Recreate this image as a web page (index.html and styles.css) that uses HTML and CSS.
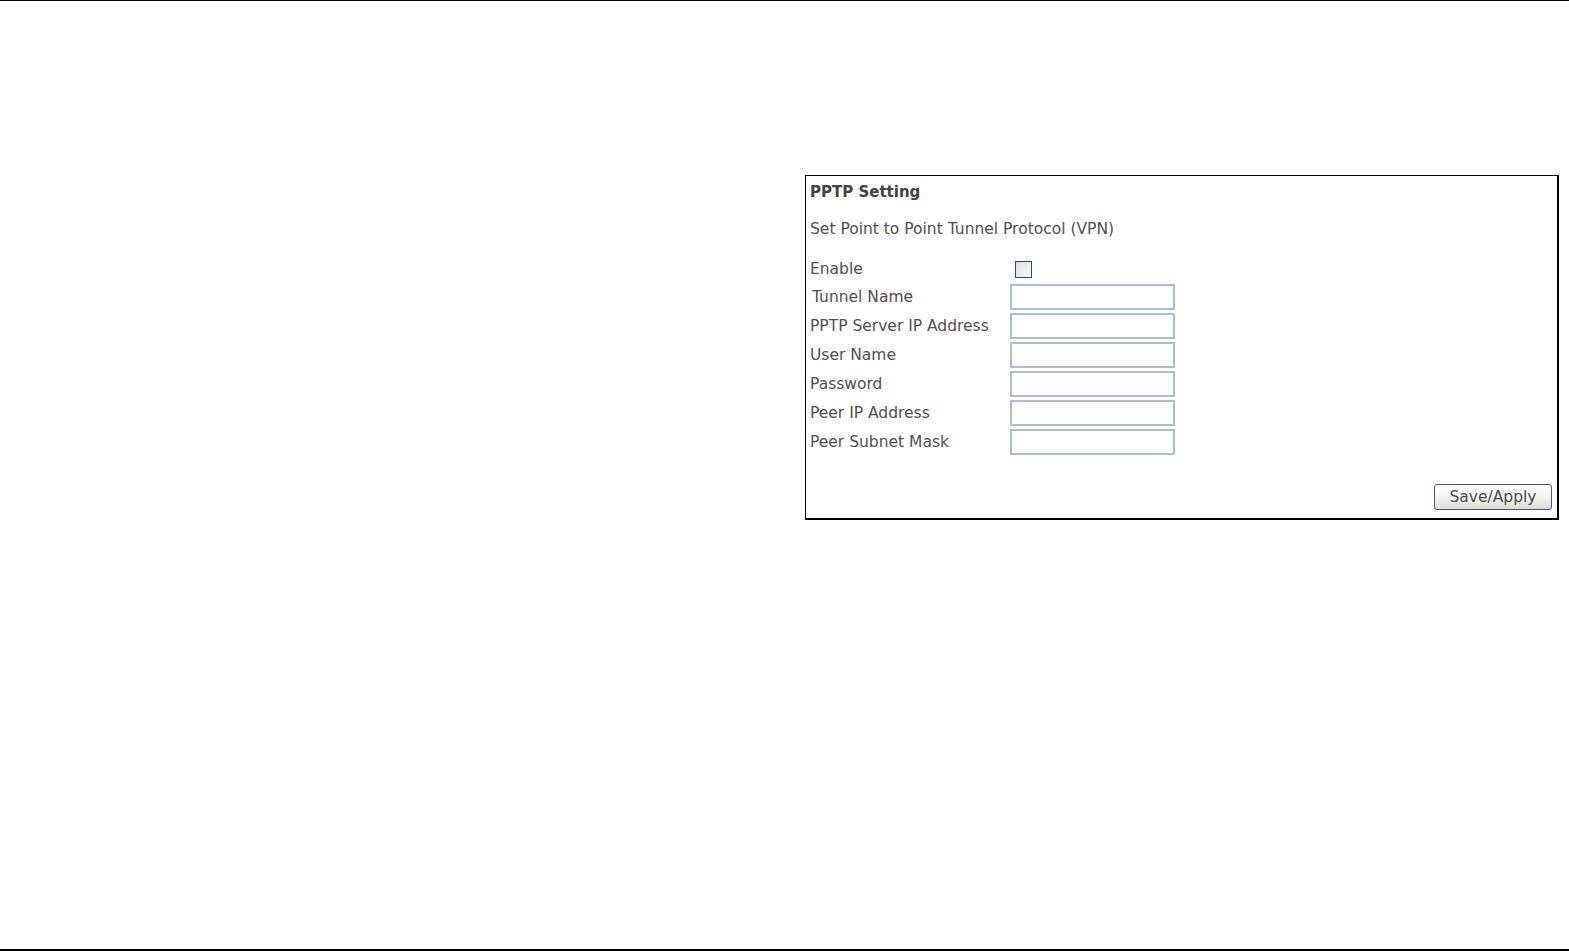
FILE: index.html
```html
<!DOCTYPE html>
<html lang="en">
<head>
  <meta charset="UTF-8">
  <title>PPTP Setting</title>
  <link rel="stylesheet" href="styles.css">
</head>
<body>
  <div class="page">
    <form class="panel">
      <div class="title">PPTP Setting</div>
      <p class="intro">Set Point to Point Tunnel Protocol (VPN)</p>

      <div class="fields">
        <label for="enable" class="low">Enable</label>
        <div><input type="checkbox" id="enable" class="check"></div>

        <label for="tunnel" class="shift">Tunnel Name</label>
        <input type="text" id="tunnel" class="field">

        <label for="server">PPTP Server IP Address</label>
        <input type="text" id="server" class="field">

        <label for="user">User Name</label>
        <input type="text" id="user" class="field">

        <label for="pass">Password</label>
        <input type="password" id="pass" class="field">

        <label for="peer">Peer IP Address</label>
        <input type="text" id="peer" class="field">

        <label for="mask">Peer Subnet Mask</label>
        <input type="text" id="mask" class="field">
      </div>

      <div class="actions">
        <button type="button" class="btn">Save/Apply</button>
      </div>
    </form>
  </div>
</body>
</html>
```

FILE: styles.css
```css
html, body {
  margin: 0;
  padding: 0;
  background: #fff;
}

body {
  font-family: Tahoma, "DejaVu Sans", sans-serif;
  font-size: 15.5px;
  color: #505050;
}

.page {
  height: 951px;
  border-top: 1px solid #000;
  border-bottom: 2px solid #000;
  padding-top: 174px;
  box-sizing: border-box;
}

.panel {
  margin-left: 805px;
  width: 754px;
  height: 345px;
  box-sizing: border-box;
  border-top: 1px solid #000;
  border-left: 1px solid #000;
  border-right: 2px solid #000;
  border-bottom: 2px solid #000;
  padding: 6px 5px 0 4px;
}

.title {
  font-weight: bold;
  font-size: 15px;
  line-height: 20px;
  color: #444;
}

.intro {
  margin: 17px 0 0;
  line-height: 20px;
}

.fields {
  display: grid;
  grid-template-columns: 200px 165px;
  grid-auto-rows: 26px;
  row-gap: 3px;
  align-items: center;
  margin-top: 16px;
}

.low {
  padding-top: 2px;
}

.shift {
  padding-left: 2px;
}

.check {
  appearance: none;
  width: 17px;
  height: 17px;
  margin: 3px 0 0 5px;
  display: block;
  border: 1px solid #1d5180;
  background: linear-gradient(135deg, #dcdcd6, #fafafa);
  box-sizing: border-box;
}

.field {
  width: 165px;
  height: 26px;
  box-sizing: border-box;
  margin: 0;
  border: 2px solid #a6bdd9;
  background: #fff;
  font: inherit;
}

.actions {
  display: flex;
  justify-content: flex-end;
  margin-top: 29px;
}

.btn {
  width: 118px;
  height: 26px;
  border: 1px solid #3b5b7f;
  border-radius: 3px;
  background: linear-gradient(#ffffff, #f1f0ea 60%, #dcdad0);
  color: #4a4a4a;
  font: inherit;
  padding: 0;
  cursor: pointer;
}
```
